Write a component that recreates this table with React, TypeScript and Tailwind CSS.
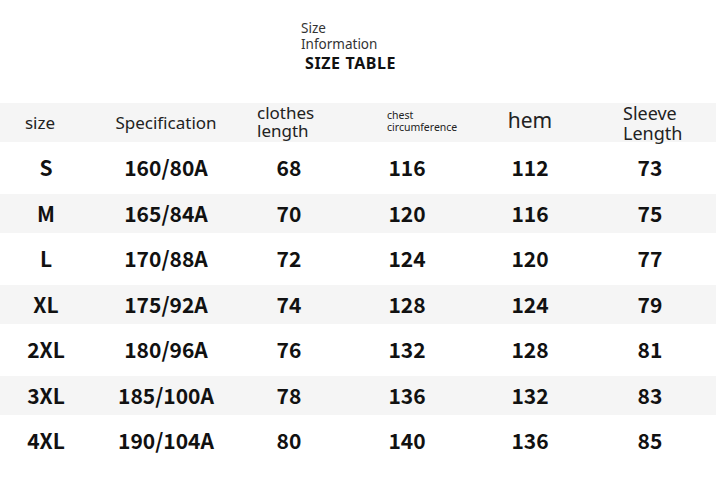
import React from "react";

const rows = [
  ["S", "160/80A", "68", "116", "112", "73"],
  ["M", "165/84A", "70", "120", "116", "75"],
  ["L", "170/88A", "72", "124", "120", "77"],
  ["XL", "175/92A", "74", "128", "124", "79"],
  ["2XL", "180/96A", "76", "132", "128", "81"],
  ["3XL", "185/100A", "78", "136", "132", "83"],
  ["4XL", "190/104A", "80", "140", "136", "85"],
];

const cols = "grid grid-cols-[92px_148px_98px_138px_108px_132px]";

export default function App() {
  return (
    <div
      className="w-[723px] h-[481px] bg-white overflow-hidden"
      style={{ fontFamily: '"Noto Sans", "Noto Sans CJK SC", sans-serif' }}
    >
      <div className="h-[103px] pt-[20px] pl-[301px]">
        <div className="text-[13.5px] leading-[16px] text-[#333]">Size</div>
        <div className="text-[13.5px] leading-[16px] text-[#333]">Information</div>
        <div className="mt-[2px] ml-[4px] text-[16px] leading-[19px] font-bold text-[#111] tracking-[0.6px]">
          SIZE TABLE
        </div>
      </div>
      <div className="w-[716px]">
        <div className={`${cols} h-[39px] bg-[#f5f5f5] items-center text-[#222]`}>
          <div className="text-[17px] pr-[12px] text-center">size</div>
          <div className="text-[17px] text-center">Specification</div>
          <div className="text-[17px] leading-[18px] pl-[17px] -mt-[3px]">
            <div>clothes</div>
            <div>length</div>
          </div>
          <div className="text-[10.5px] leading-[12px] pl-[49px] -mt-[4px]">
            <div>chest</div>
            <div>circumference</div>
          </div>
          <div className="text-[21px] text-center -mt-[4px]">hem</div>
          <div className="text-[18px] leading-[20px] pl-[39px]">
            <div>Sleeve</div>
            <div>Length</div>
          </div>
        </div>
        {rows.map((r, i) => (
          <div
            key={r[0]}
            className={`${cols} items-center text-[#111] font-bold text-[21px] ${
              i % 2 === 0 ? "h-[52px] bg-white" : "h-[39px] bg-[#f5f5f5]"
            }`}
            style={{ fontFamily: '"Noto Sans CJK SC", "Noto Sans", sans-serif' }}
          >
            {r.map((c, j) => (
              <div key={j} className="text-center">
                {c}
              </div>
            ))}
          </div>
        ))}
      </div>
    </div>
  );
}
